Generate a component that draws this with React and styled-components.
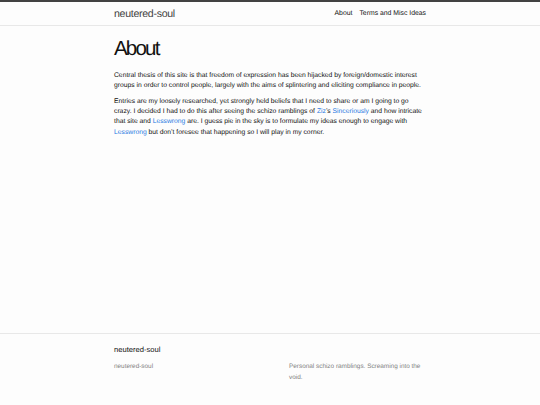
import React from 'react'
import styled, { createGlobalStyle } from 'styled-components'

const GlobalStyle = createGlobalStyle`
  html, body {
    margin: 0;
    padding: 0;
    background: #fdfdfd;
  }
  body {
    font-family: 'Liberation Sans', Arial, sans-serif;
    color: #111111;
    text-rendering: geometricPrecision;
  }
`

const Page = styled.div`
  display: flex;
  flex-direction: column;
  min-height: 100vh;
`

const Header = styled.header`
  border-top: 2px solid #424242;
  border-bottom: 1px solid #e8e8e8;
`

const Wrapper = styled.div`
  width: 312px;
  margin: 0 auto;
`

const HeaderRow = styled(Wrapper)`
  display: flex;
  justify-content: space-between;
  align-items: center;
  height: 23px;
`

const SiteTitle = styled.a`
  font-size: 10.6px;
  letter-spacing: -0.3px;
  color: #424242;
  text-decoration: none;
`

const Nav = styled.nav`
  display: flex;
  gap: 7px;
`

const NavLink = styled.a`
  font-size: 6.85px;
  color: #111111;
  text-decoration: none;
`

const Main = styled.main`
  flex: 1;
  padding-top: 12px;
`

const Title = styled.h1`
  font-size: 20.5px;
  font-weight: 400;
  letter-spacing: -1.8px;
  line-height: 1.1;
  margin: 0 0 10px;
`

const Para = styled.p`
  font-size: 6.75px;
  line-height: 10.2px;
  margin: 0 0 6px;
`

const Link = styled.a`
  color: #2a7ae2;
  text-decoration: none;
`

const Footer = styled.footer`
  border-top: 1px solid #e8e8e8;
  padding: 10px 0 22px;
`

const FooterHeading = styled.h2`
  font-size: 7.6px;
  font-weight: 400;
  color: #111111;
  margin: 0 0 6px;
  line-height: 12px;
`

const FooterCols = styled.div`
  display: grid;
  grid-template-columns: 175px 1fr;
`

const FooterText = styled.p`
  font-size: 6.4px;
  line-height: 10.5px;
  color: #828282;
  margin: 0;
`

export default function App() {
  return (
    <Page>
      <GlobalStyle />
      <Header>
        <HeaderRow>
          <SiteTitle href="#">neutered-soul</SiteTitle>
          <Nav>
            <NavLink href="#">About</NavLink>
            <NavLink href="#">Terms and Misc Ideas</NavLink>
          </Nav>
        </HeaderRow>
      </Header>
      <Main>
        <Wrapper>
          <Title>About</Title>
          <Para>
            Central thesis of this site is that freedom of expression has been hijacked by
            foreign/domestic interest groups in order to control people, largely with the aims of
            splintering and eliciting compliance in people.
          </Para>
          <Para>
            Entries are my loosely researched, yet strongly held beliefs that I need to share or am I
            going to go crazy. I decided I had to do this after seeing the schizo ramblings of{' '}
            <Link href="#">Ziz</Link>’s <Link href="#">Sinceriously</Link> and how intricate that site
            and <Link href="#">Lesswrong</Link> are. I guess pie in the sky is to formulate my ideas
            enough to engage with <Link href="#">Lesswrong</Link> but don’t foresee that happening so I
            will play in my corner.
          </Para>
        </Wrapper>
      </Main>
      <Footer>
        <Wrapper>
          <FooterHeading>neutered-soul</FooterHeading>
          <FooterCols>
            <FooterText>neutered-soul</FooterText>
            <FooterText>Personal schizo ramblings. Screaming into the void.</FooterText>
          </FooterCols>
        </Wrapper>
      </Footer>
    </Page>
  )
}
